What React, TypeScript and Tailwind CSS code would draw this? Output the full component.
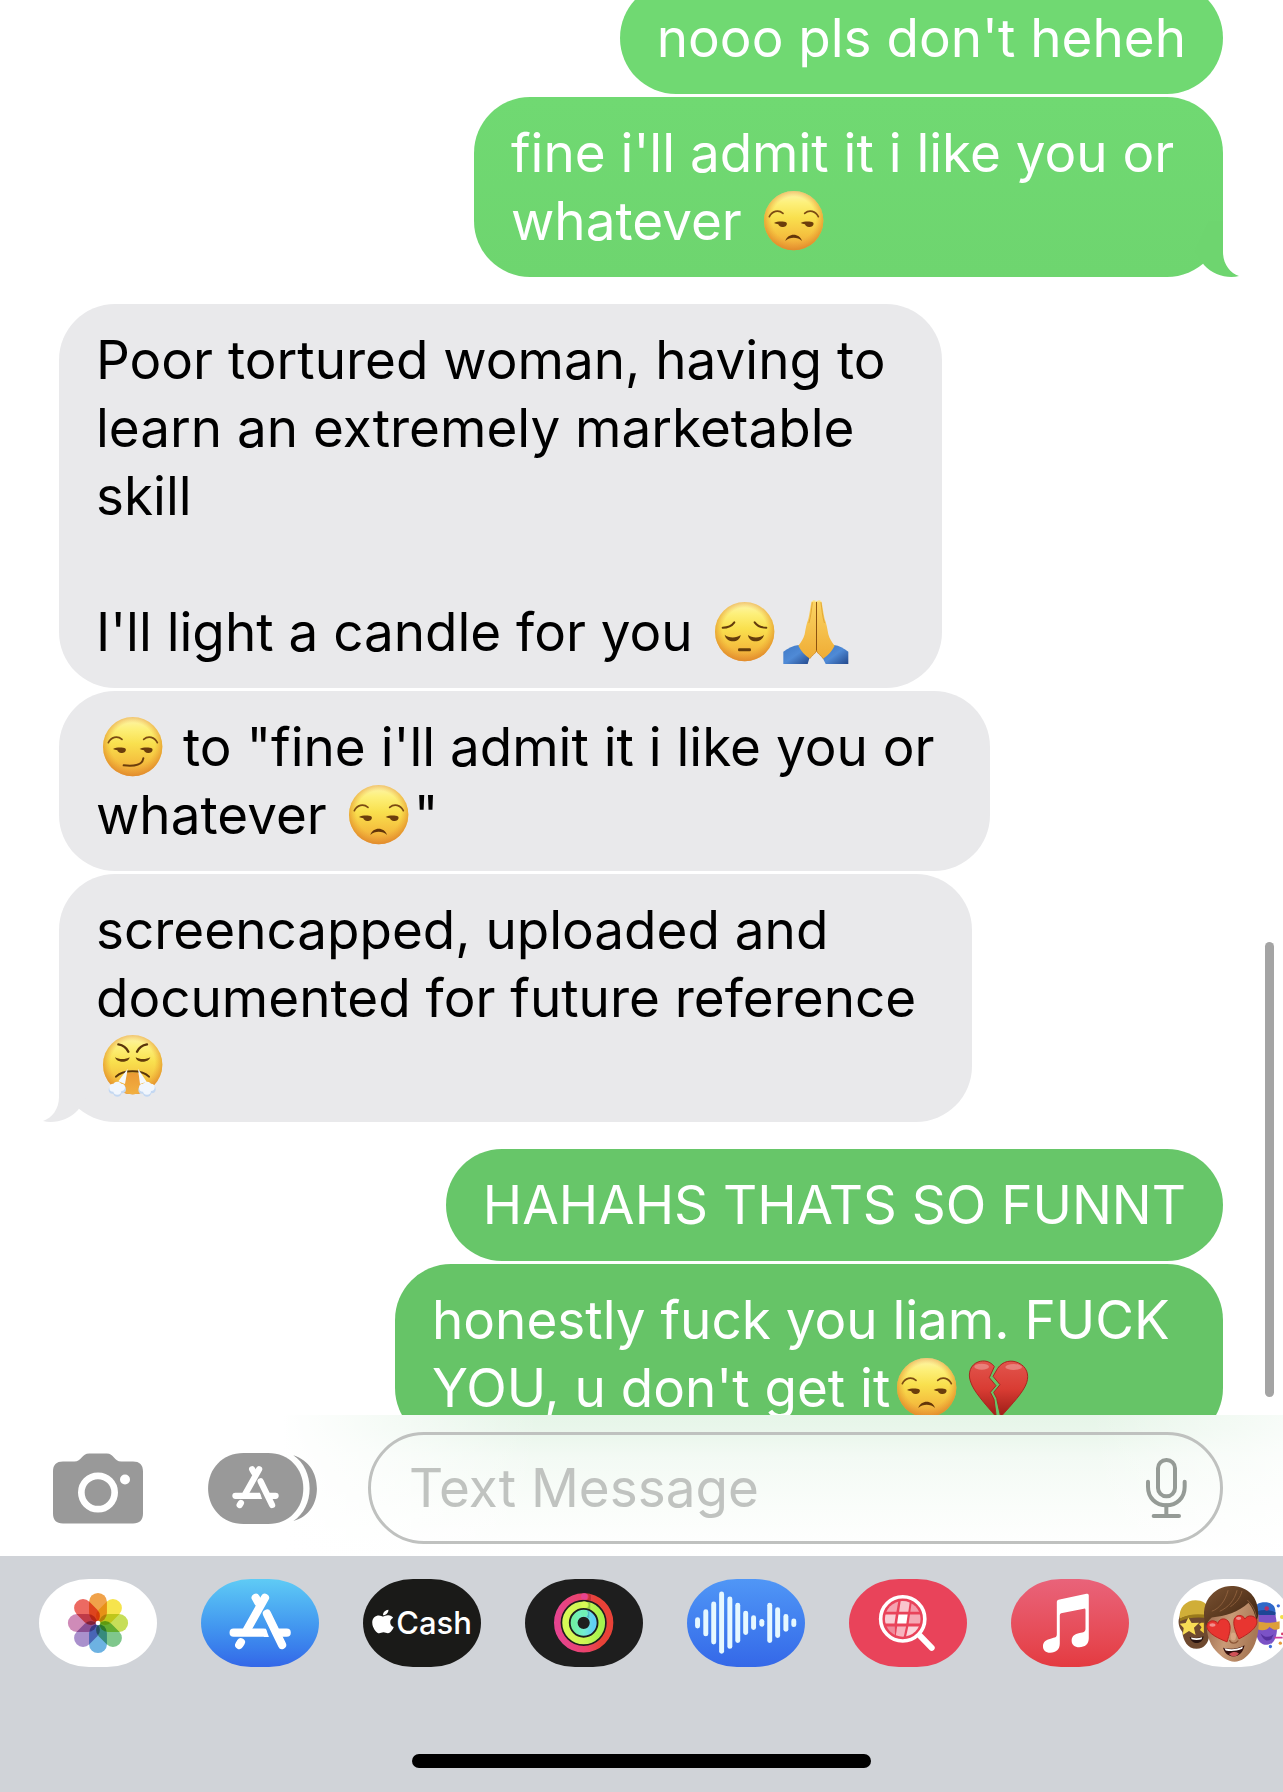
import type { ReactNode } from "react";
import { FaApple } from "react-icons/fa";

function SharedGradients() {
  return (
    <svg className="absolute h-0 w-0" aria-hidden="true">
      <defs>
        <linearGradient id="face" x1="0" y1="0" x2="0" y2="1">
          <stop offset="0" stopColor="#fdf5b0" />
          <stop offset="0.2" stopColor="#fdf07a" />
          <stop offset="0.45" stopColor="#f9e04e" />
          <stop offset="0.75" stopColor="#f5c03f" />
          <stop offset="1" stopColor="#eda03a" />
        </linearGradient>
        <radialGradient id="faceEdge" cx="0.5" cy="0.47" r="0.53">
          <stop offset="0.7" stopColor="#e8962e" stopOpacity="0" />
          <stop offset="1" stopColor="#dd8428" stopOpacity="0.75" />
        </radialGradient>
        <linearGradient id="heart" x1="0" y1="0" x2="0" y2="1">
          <stop offset="0" stopColor="#e2554d" />
          <stop offset="0.5" stopColor="#d93c33" />
          <stop offset="1" stopColor="#9c1c16" />
        </linearGradient>
        <linearGradient id="hand" x1="0" y1="0" x2="0" y2="1">
          <stop offset="0" stopColor="#fbd564" />
          <stop offset="1" stopColor="#efac35" />
        </linearGradient>
        <linearGradient id="sleeve" x1="0" y1="0" x2="1" y2="1">
          <stop offset="0" stopColor="#3f79c6" />
          <stop offset="0.5" stopColor="#4f8ad6" />
          <stop offset="1" stopColor="#23488c" />
        </linearGradient>
        <linearGradient id="chin" x1="0" y1="0" x2="0" y2="1">
          <stop offset="0" stopColor="#eb9a34" />
          <stop offset="1" stopColor="#f2b041" />
        </linearGradient>
      </defs>
    </svg>
  );
}

function Emoji({ label, viewBox, children }: { label: string; viewBox: string; children: ReactNode }) {
  return (
    <svg role="img" aria-label={label} viewBox={viewBox} className="inline-block h-[68px] w-[72px] align-top">
      {children}
    </svg>
  );
}

function Disc({ cx, cy }: { cx: number; cy: number }) {
  return (
    <>
      <circle cx={cx} cy={cy} r="89" fill="url(#face)" />
      <circle cx={cx} cy={cy} r="89" fill="url(#faceEdge)" />
    </>
  );
}

function SideEyes() {
  return (
    <>
      <g fill="none" stroke="#7b4a12" strokeWidth="5" strokeLinecap="round">
        <path d="M789 331c8-17 27-22 41-10" />
        <path d="M936 331c-8-17-27-22-41-10" />
      </g>
      <g fill="#6b3d0c">
        <path d="M803 350c10-5 28-6 38-1 3 8-5 13-13 13-7 0-11-4-12-8-5-1-9-2-13-4Z" />
        <path d="M883 350c10-5 28-6 38-1 3 8-5 13-13 13-7 0-11-4-12-8-5-1-9-2-13-4Z" />
      </g>
    </>
  );
}

function Unamused() {
  return (
    <Emoji label="unamused face" viewBox="752 242 216 204">
      <Disc cx={862} cy={343} />
      <SideEyes />
      <path d="M837 404c7-25 43-25 50 0-13-13-37-13-50 0Z" fill="#633509" />
    </Emoji>
  );
}

function Smirk() {
  return (
    <Emoji label="smirking face" viewBox="752 242 216 204">
      <Disc cx={862} cy={343} />
      <SideEyes />
      <path d="M835 399c27 3 56 0 59-21" fill="none" stroke="#6b3d0c" strokeWidth="6" strokeLinecap="round" />
    </Emoji>
  );
}

function Pensive() {
  return (
    <Emoji label="pensive face" viewBox="75 53 216 204">
      <Disc cx={185} cy={154} />
      <g fill="none" stroke="#633c0c" strokeWidth="6" strokeLinecap="round">
        <path d="M119 142c14 0 28-6 35-16" />
        <path d="M250 142c-14 0-28-6-35-16" />
      </g>
      <g fill="#633c0c">
        <path d="M125 163c11 11 36 11 48 1-3 26-43 25-48-1Z" />
        <path d="M195 164c12 10 37 10 48-1-5 26-45 27-48 1Z" />
        <rect x="165" y="204" width="39" height="9" rx="4" />
      </g>
    </Emoji>
  );
}

function FoldedHands() {
  return (
    <Emoji label="folded hands" viewBox="293 53 216 204">
      <path d="M303 214c15-11 29-18 46-20l33 37-6 20h-73Z" fill="url(#sleeve)" />
      <path d="M498 214c-15-11-27-18-43-20l-35 37 10 20h68Z" fill="url(#sleeve)" />
      <path d="M402 63c-4-4-13-4-15 3-3 16-5 34-9 50-6 16-8 29-11 46-4 13-10 24-19 34 8 16 19 29 35 39 6-13 18-15 19-23Z" fill="url(#hand)" />
      <path d="M403 63c4-4 13-4 15 3 3 16 5 34 9 50 6 16 8 29 11 46 4 13 10 24 19 34-8 16-19 29-35 39-6-13-18-15-19-23Z" fill="url(#hand)" />
      <g fill="none" stroke="#b87418" strokeWidth="2.5" strokeLinecap="round">
        <path d="M402.500 66v146" stroke="#8c520f" strokeWidth="3" />
        <path d="M390 67c-3 22-4 40-10 60" stroke="#dfa02f" />
        <path d="M416 67c3 22 4 40 10 60" stroke="#dfa02f" />
        <path d="M402 212c-3 10-12 11-19 22M403 212c3 10 12 11 19 22" stroke="#d18a25" />
      </g>
      <path d="M390 64c3-3 8-3 11 1M405 65c3-4 8-4 11-1" fill="none" stroke="#fff0a0" strokeWidth="3" />
    </Emoji>
  );
}

function Cloud({ x, y }: { x: number; y: number }) {
  return (
    <g>
      <g fill="#c4d8f2">
        <circle cx={x - 14} cy={y + 4} r="12" />
        <circle cx={x + 14} cy={y + 3} r="12" />
        <circle cx={x} cy={y + 12} r="13" />
      </g>
      <g fill="#f1f6fd">
        <circle cx={x - 12} cy={y - 2} r="12" />
        <circle cx={x + 12} cy={y - 3} r="11" />
        <circle cx={x} cy={y - 6} r="14" />
        <circle cx={x} cy={y + 7} r="12" />
      </g>
    </g>
  );
}

function Steam() {
  return (
    <Emoji label="face with steam from nose" viewBox="195 95 216 204">
      <Disc cx={305} cy={193} />
      <path d="M288 217h34l12 57c-18 10-40 10-58 0Z" fill="url(#chin)" />
      <g fill="none" stroke="#59350b" strokeLinecap="round">
        <path d="M262 132c12 2 24 9 30 22M348 132c-12 2-24 9-30 22" strokeWidth="7" />
        <path d="M255 229c20-22 79-22 99 0" strokeWidth="6" />
      </g>
      <g fill="#633c0c">
        <path d="M252 171c12 7 32 7 44 0-3 18-38 18-44 0Z" />
        <path d="M314 171c12 7 32 7 44 0-6 18-41 18-44 0Z" />
      </g>
      <path d="M290 205 262 243l20 8ZM321 205l6 46 20-7Z" fill="#f4f8fd" />
      <Cloud x={259} y={264} />
      <Cloud x={348} y={264} />
    </Emoji>
  );
}

function BrokenHeart() {
  return (
    <Emoji label="broken heart" viewBox="323 69 216 204">
      <path d="M420 107c-11-16-31-21-49-14-22 8-31 33-23 57 9 31 43 67 78 108l-7-53-11-21 17-20-20-24Z" fill="url(#heart)" stroke="#a82720" strokeWidth="3" />
      <path d="M430 112c15-22 41-27 63-16 24 11 32 35 24 59-9 28-43 63-78 103l-12-56-9-18 19-23-21-25Z" fill="url(#heart)" stroke="#a82720" strokeWidth="3" />
      <ellipse cx="382" cy="107" rx="22" ry="9" fill="#fff" opacity="0.28" />
      <ellipse cx="478" cy="108" rx="25" ry="9" fill="#fff" opacity="0.28" />
    </Emoji>
  );
}

type BubbleProps = {
  side: "sent" | "received";
  color: string;
  tailColor?: string;
  width?: string;
  children: ReactNode;
};

function Bubble({ side, color, tailColor, width = "", children }: BubbleProps) {
  const sent = side === "sent";
  return (
    <div
      className={`relative max-w-full rounded-[56px] px-[37px] py-[22px] ${color} ${width} ${
        sent ? "self-end text-white" : "self-start text-black"
      }`}
    >
      {children}
      {tailColor && (
        <svg
          aria-hidden="true"
          viewBox="0 0 56 56"
          className={`absolute bottom-0 h-14 w-14 ${tailColor} ${sent ? "-right-4" : "-left-4 -scale-x-100"}`}
        >
          <path d="M40 0V31C40 43 47 52 56 55C45 58 30 54 21 44L12 30L26 0Z" fill="currentColor" />
        </svg>
      )}
    </div>
  );
}

function Line({ children }: { children?: ReactNode }) {
  return <p className="h-[68px] whitespace-pre">{children}</p>;
}

function AppStoreGlyph() {
  return (
    <g stroke="currentColor" strokeWidth="25" strokeLinecap="round" fill="none">
      <path d="M795 592 740 690" />
      <path d="M767 592l8 14" />
      <path d="M801 640l46 95" />
      <path d="M700 698h88" />
      <path d="M838 698h23" />
      <path d="M722 727l-5 8" />
      <path d="M790 686l8 0 9 25h-16Z" fill="currentColor" stroke="none" />
    </g>
  );
}

function CameraIcon() {
  return (
    <svg viewBox="159 158 270 212" className="h-[71px] w-[90px]" aria-hidden="true">
      <path
        d="M189 183h34c22 0 22-24 45-24h52c22 0 22 24 44 24h35c20 0 30 10 30 30v126c0 20-10 30-30 30H189c-20 0-30-10-30-30V213c0-20 10-30 30-30Z"
        fill="#999"
      />
      <circle cx="294" cy="276" r="50" fill="none" stroke="#fff" strokeWidth="20" />
      <circle cx="375" cy="237" r="15" fill="#fff" />
    </svg>
  );
}

function AppsIcon() {
  return (
    <svg viewBox="623 158 328 214" className="h-[71px] w-[109px]" aria-hidden="true">
      <path
        d="M730 158h74c64 0 106 48 106 107s-42 107-106 107h-74c-64 0-107-48-107-107s43-107 107-107Z"
        fill="#999"
      />
      <path
        d="M880 165C928 180 951 220 951 265C951 310 928 350 880 363C912 342 929 305 929 265C929 225 912 186 880 165Z"
        fill="#999"
      />
      <g transform="translate(179 -238) scale(0.752)" color="#fff">
        <AppStoreGlyph />
      </g>
    </svg>
  );
}

function MicIcon() {
  return (
    <svg viewBox="978 171 123 180" className="h-[60px] w-[41px]" aria-hidden="true">
      <g fill="none" stroke="#959b96" strokeWidth="12" strokeLinecap="round">
        <rect x="1014" y="177" width="51" height="109" rx="25" />
        <path d="M984 242v15c0 34 24 56 55 56s55-22 55-56v-15" />
        <path d="M1039 313v30M1001 345h76" />
      </g>
    </svg>
  );
}

const petals = ["#f0a24a", "#f6e44c", "#c6de58", "#7fc78c", "#6db2e2", "#a990cc", "#cf8bb8", "#ec6a62"];

function PhotosIcon() {
  return (
    <svg viewBox="117 536 354 266" className="isolate h-full w-full" aria-hidden="true">
      {petals.map((color, i) => (
        <rect
          key={color}
          x="267"
          y="578"
          width="54"
          height="88"
          rx="27"
          fill={color}
          transform={`rotate(${i * 45} 294 669)`}
          className="mix-blend-multiply"
        />
      ))}
      <circle cx="294" cy="669" r="7" fill="#fff" />
    </svg>
  );
}

function AppStoreIcon() {
  return (
    <svg viewBox="602 535 356 267" className="h-full w-full text-white" aria-hidden="true">
      <AppStoreGlyph />
    </svg>
  );
}

function FitnessIcon() {
  return (
    <svg viewBox="555 535 356 267" className="h-full w-full" aria-hidden="true">
      <defs>
        <linearGradient id="move" x1="0" x2="1" y1="0.4" y2="0.3">
          <stop offset="0" stopColor="#e6448f" />
          <stop offset="0.5" stopColor="#ea436a" />
          <stop offset="0.75" stopColor="#e84238" />
        </linearGradient>
        <linearGradient id="exercise">
          <stop offset="0" stopColor="#d8f956" />
          <stop offset="0.5" stopColor="#cdf653" />
          <stop offset="1" stopColor="#a3f34f" />
        </linearGradient>
        <linearGradient id="stand">
          <stop offset="0" stopColor="#70f0a4" />
          <stop offset="0.5" stopColor="#73efd0" />
          <stop offset="1" stopColor="#60cff6" />
        </linearGradient>
      </defs>
      <g fill="none">
        <circle cx="732" cy="668" r="80" stroke="url(#move)" strokeWidth="20" />
        <circle cx="732" cy="668" r="55" stroke="url(#exercise)" strokeWidth="20" />
        <circle cx="732" cy="668" r="29" stroke="url(#stand)" strokeWidth="21" />
      </g>
      <g opacity="0.4">
        <path d="M741 579c8 5 8 14 1 20l12 2v-19Z" fill="#8c1c18" />
        <path d="M741 604c8 5 8 14 1 20l10 3v-19Z" fill="#5b8c22" />
        <path d="M740 630c7 5 7 13 1 20l8 4v-20Z" fill="#2b7c8c" />
      </g>
      <circle cx="734" cy="588" r="10" fill="#e6448f" />
      <circle cx="734" cy="613" r="10" fill="#d8f956" />
      <circle cx="734" cy="639" r="10" fill="#70f0b4" />
    </svg>
  );
}

const audioBars = [
  [1072, 651, 685],
  [1097, 627, 709],
  [1121, 603, 734],
  [1145, 573, 762],
  [1170, 588, 747],
  [1194, 607, 729],
  [1218, 631, 705],
  [1242, 645, 690],
  [1267, 656, 680],
  [1291, 607, 729],
  [1315, 621, 714],
  [1340, 641, 695],
  [1364, 655, 681],
];

function AudioIcon() {
  return (
    <svg viewBox="1041 535 356 267" className="h-full w-full" aria-hidden="true">
      {audioBars.map(([x, top, bottom]) => (
        <rect key={x} x={x - 7.5} y={top} width="15" height={bottom - top} rx="7.5" fill="#e6f8ff" />
      ))}
    </svg>
  );
}

function ImagesIcon() {
  return (
    <svg viewBox="86 535 356 267" className="h-full w-full" aria-hidden="true">
      <defs>
        <clipPath id="lens">
          <circle cx="248" cy="656" r="54" />
        </clipPath>
      </defs>
      <g clipPath="url(#lens)">
        <path d="M190 600h45l-6 34h-39Z" fill="#f5a3b0" />
        <path d="M242 600h28l-5 34h-28Z" fill="#f9c5cd" />
        <path d="M276 600h30v34h-35Z" fill="#f39aa9" />
        <path d="M190 643h37l-4 27h-33Z" fill="#f9cdd4" />
        <path d="M235 643h28l-4 27h-28Z" fill="#fff" />
        <path d="M270 643h36v27h-40Z" fill="#f5a9b5" />
        <path d="M190 679h34l1 36h-35Z" fill="#f08a9b" />
        <path d="M231 679h27l-8 36h-24Z" fill="#f7b4bf" />
        <path d="M265 679h40v36h-48Z" fill="#fad6dc" />
      </g>
      <circle cx="248" cy="656" r="67" fill="none" stroke="#fff" strokeWidth="11" />
      <path d="M300 707l36 37" stroke="#fff" strokeWidth="18" strokeLinecap="round" />
    </svg>
  );
}

function MusicIcon() {
  return (
    <svg viewBox="573 535 356 267" className="h-full w-full" aria-hidden="true">
      <path
        d="M716 598l85-18q7-2 7 5V715c0 18-12 27-29 27-14 0-23-8-23-20 0-13 9-20 24-23 13-2 18-4 18-13V629q0-5-5-4l-69 14q-4 1-4 6v86c0 18-11 28-29 28-14 0-22-8-22-20 0-13 9-20 23-23 14-3 19-4 19-13V604q0-5 5-6Z"
        fill="#fff"
      />
    </svg>
  );
}

function MemojiIcon() {
  return (
    <svg viewBox="1059 536 354 266" className="h-full w-full" aria-hidden="true">
      <defs>
        <linearGradient id="skin" x1="0" x2="1" y1="0" y2="0.3">
          <stop offset="0" stopColor="#95654a" />
          <stop offset="0.5" stopColor="#c99a76" />
          <stop offset="1" stopColor="#a87855" />
        </linearGradient>
        <linearGradient id="hair" x1="0" x2="1" y1="0" y2="1">
          <stop offset="0" stopColor="#7d5433" />
          <stop offset="0.5" stopColor="#5c3a20" />
          <stop offset="1" stopColor="#382110" />
        </linearGradient>
      </defs>
      <path d="M1076 655c-4 12 0 30 10 41 2 26 16 51 43 51 24 0 36-18 38-40v-70h-86Z" fill="#6e492f" />
      <path d="M1078 656c-4-34 19-56 48-56 20 0 34 10 42 24v26c-30-8-62-8-90 6Z" fill="#d0ae38" />
      <path d="M1078 656c28-16 60-16 90-10v9c-30-4-62-4-89 9Z" fill="#9a7a1c" />
      <path d="M1104 652l10 17 23-1-16 15 5 22-20-12-19 12 3-21-12-13 18-2Z" fill="#f7dc55" />
      <path d="M1143 668l8 0v32l-12-10 5-8-8-10Z" fill="#f4cf3c" />
      <path d="M1108 711c14 5 28 4 42-2-1 26-36 28-42 2Z" fill="#281410" />
      <path d="M1112 713c12 3 23 3 34-1l-2 6c-10 3-20 3-30 0Z" fill="#fff" />

      <path d="M1312 612c18-10 46-6 52 8 6 14 2 25 2 30h-56Z" fill="#2f68c8" />
      <path d="M1310 634c20-6 40-6 58 3l-2 16h-56Z" fill="#1d4695" />
      <circle cx="1341" cy="625" r="7" fill="#b0306c" />
      <path d="M1310 645h57c8 34 10 86-25 90-17 1-28-12-32-30Z" fill="#7b52c6" />
      <path d="M1312 664c24 6 47 6 68 0v22c-12 8-24 2-30-6-8 11-24 14-38 7Z" fill="#dd9f3a" />
      <path d="M1322 700c12 14 27 14 40 3l-7 15c-13 8-24 5-33-18Z" fill="#57319f" />
      <path d="M1364 713h25" stroke="#cf3d9b" strokeWidth="5" />
      <circle cx="1376" cy="617" r="5" fill="#3f6fdb" />
      <circle cx="1387" cy="651" r="6" fill="#f2df46" />
      <circle cx="1352" cy="740" r="5" fill="#3f6fdb" />
      <circle cx="1382" cy="730" r="5" fill="#e69a3c" />
      <circle cx="1388" cy="702" r="4" fill="#d93e6d" />

      <path d="M1160 650c-4 42 5 80 27 103 17 19 36 33 57 33 20 0 37-13 50-32 18-26 25-64 22-110l-18-38h-110Z" fill="url(#skin)" />
      <path d="M1158 681c-10-30-10-63 8-88 20-28 50-40 82-35 43 7 70 39 67 89l-5 18c-3-22-12-42-24-57-30 28-71 42-111 44-10 8-14 17-17 29Z" fill="url(#hair)" />
      <g fill="none" stroke="#a8744c" strokeWidth="3" opacity="0.6" strokeLinecap="round">
        <path d="M1176 633c22-8 39-29 48-62M1200 633c26-12 43-32 51-62M1232 619c18-12 30-28 34-46" />
        <path d="M1283 600c14 13 23 29 26 48" />
      </g>
      <path
        d="M1221 726c-24-9-59-26-61-45-1-18 22-26 34-10 1-14 19-20 30-8 13 17 3 42-3 63Z"
        fill="#e83530"
        stroke="#bb211e"
        strokeWidth="3"
      />
      <path
        d="M1257 717c-8-17-20-43-14-60 7-16 27-13 32 0 8-14 31-12 36 4 5 21-28 43-54 56Z"
        fill="#e83530"
        stroke="#bb211e"
        strokeWidth="3"
      />
      <ellipse cx="1177" cy="675" rx="9" ry="5" fill="#fff" opacity="0.45" />
      <ellipse cx="1256" cy="655" rx="8" ry="5" fill="#fff" opacity="0.45" />
      <path d="M1229 722c4 10 18 11 25 1" fill="none" stroke="#8d5737" strokeWidth="4" strokeLinecap="round" />
      <ellipse cx="1240" cy="710" rx="8" ry="12" fill="#d8a682" />
      <path d="M1209 744c19 5 42 4 65-8-4 22-17 34-34 34-15 0-26-9-31-26Z" fill="#34100e" />
      <path d="M1213 745c19 5 38 4 56-5l-2 7c-17 7-34 8-50 5Z" fill="#fff" />
      <path d="M1227 763c10-8 21-8 30-2-8 11-22 12-30 2Z" fill="#cf5157" />
    </svg>
  );
}

const apps = [
  { name: "Photos", bg: "bg-white", icon: <PhotosIcon /> },
  { name: "App Store", bg: "bg-linear-to-b from-[#5fcbf5] to-[#3467e8]", icon: <AppStoreIcon /> },
  {
    name: "Apple Cash",
    bg: "bg-[#1a1a18]",
    icon: (
      <span className="flex h-full items-center justify-center gap-[2px] text-[31px] font-medium text-white">
        <FaApple className="mb-1 h-[27px] w-[22px] shrink-0" preserveAspectRatio="none" aria-hidden="true" />
        Cash
      </span>
    ),
  },
  { name: "Fitness", bg: "bg-[#1e1e1e]", icon: <FitnessIcon /> },
  { name: "Audio messages", bg: "bg-linear-to-b from-[#5096f6] to-[#3568e8]", icon: <AudioIcon /> },
  { name: "Images", bg: "bg-[#e9435a]", icon: <ImagesIcon /> },
  { name: "Music", bg: "bg-linear-to-b from-[#e9637a] to-[#e43a40]", icon: <MusicIcon /> },
  { name: "Memoji", bg: "bg-white", icon: <MemojiIcon /> },
];

export default function App() {
  return (
    <div className="flex h-screen flex-col overflow-hidden bg-white font-['Inter','Liberation_Sans',sans-serif]">
      <SharedGradients />
      <main className="relative min-h-0 flex-1 overflow-hidden">
        <div className="-mt-[18px] flex flex-col gap-[27px] pr-[60px] pl-[59px] text-[53px] leading-[68px]">
          <section className="flex flex-col gap-[3px]">
            <Bubble side="sent" color="bg-[#70d972]">
              <Line>nooo pls don't heheh</Line>
            </Bubble>
            <Bubble
              side="sent"
              color="bg-linear-to-b from-[#70d972] to-[#6ed56f]"
              tailColor="text-[#6ed56f]"
              width="w-[749px]"
            >
              <Line>fine i'll admit it i like you or</Line>
              <Line>
                whatever <Unamused />
              </Line>
            </Bubble>
          </section>

          <section className="flex flex-col gap-[3px]">
            <Bubble side="received" color="bg-[#e9e9eb]" width="w-[883px]">
              <Line>Poor tortured woman, having to</Line>
              <Line>learn an extremely marketable</Line>
              <Line>skill</Line>
              <Line />
              <Line>
                I'll light a candle for you <Pensive />
                <FoldedHands />
              </Line>
            </Bubble>
            <Bubble side="received" color="bg-[#e9e9eb]" width="w-[931px]">
              <Line>
                <Smirk /> to "fine i'll admit it i like you or
              </Line>
              <Line>
                whatever <Unamused />"
              </Line>
            </Bubble>
            <Bubble side="received" color="bg-[#e9e9eb]" tailColor="text-[#e9e9eb]" width="w-[913px]">
              <Line>screencapped, uploaded and</Line>
              <Line>documented for future reference</Line>
              <Line>
                <Steam />
              </Line>
            </Bubble>
          </section>

          <section className="flex flex-col gap-[3px]">
            <Bubble side="sent" color="bg-[#67c669]">
              <Line>HAHAHS THATS SO FUNNT</Line>
            </Bubble>
            <Bubble side="sent" color="bg-[#66c467]" width="w-[828px]">
              <Line>honestly fuck you liam. FUCK</Line>
              <Line>
                YOU, u don't get it
                <Unamused />
                <BrokenHeart />
              </Line>
            </Bubble>
          </section>
        </div>
        <div className="absolute right-[9px] bottom-[18px] h-[455px] w-[9px] rounded-full bg-[#a4a4a4]" />
      </main>

      <form
        className="flex items-center bg-[linear-gradient(to_right,#ffffff_22%,#ffffff00_42%,#ffffff00_85%,#ffffffb0_100%),linear-gradient(to_bottom,#e6f5e8_0%,#e9f6eb_10%,#f3faf4_30%,#fafdfa_65%,#ffffff_100%)] pt-[17px] pr-[60px] pb-3 pl-[53px]"
        onSubmit={(event) => event.preventDefault()}
      >
        <button type="button" aria-label="Camera">
          <CameraIcon />
        </button>
        <button type="button" aria-label="Apps" className="mr-[51px] ml-[65px]">
          <AppsIcon />
        </button>
        <div className="flex h-28 min-w-0 flex-1 items-center rounded-full border-3 border-[#bfc1bf] pr-[33px] pl-[38px]">
          <input
            type="text"
            aria-label="Text Message"
            placeholder="Text Message"
            className="min-w-0 flex-1 bg-transparent text-[53px] leading-[68px] text-black outline-none placeholder:text-[#c0c3c0]"
          />
          <button type="button" aria-label="Dictate">
            <MicIcon />
          </button>
        </div>
      </form>

      <footer className="overflow-hidden bg-[#d0d3d8] pt-[23px] pb-6">
        <nav aria-label="Message apps" className="flex gap-11 pl-[39px]">
          {apps.map((app) => (
            <button
              key={app.name}
              type="button"
              aria-label={app.name}
              className={`h-[88px] w-[118px] shrink-0 overflow-hidden rounded-[50px/44px] ${app.bg}`}
            >
              {app.icon}
            </button>
          ))}
        </nav>
        <div className="mx-auto mt-[87px] h-[14px] w-[459px] rounded-full bg-black" />
      </footer>
    </div>
  );
}
